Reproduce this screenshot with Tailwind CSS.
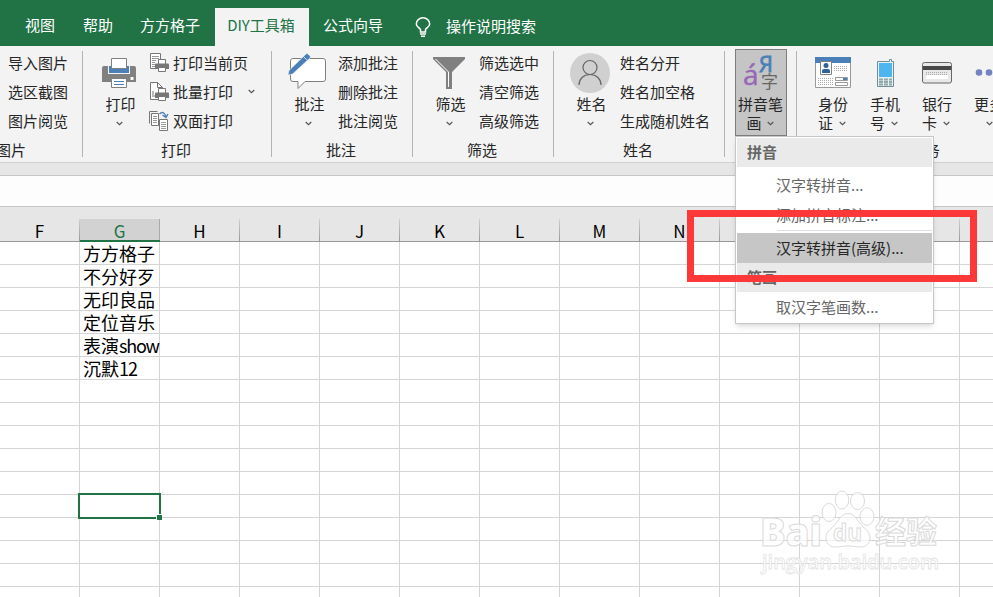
<!DOCTYPE html>
<html lang="zh">

<head>
    <meta charset="UTF-8">
    <meta name="viewport" content="width=device-width, initial-scale=1.0">
    <title>DIY工具箱</title>
    <script src="https://cdn.jsdelivr.net/npm/@tailwindcss/browser@4"></script>
</head>

<body class="relative w-[993px] h-[597px] overflow-hidden bg-white font-['Noto_Sans_CJK_SC',sans-serif] text-[15px] leading-[18px] text-[#262626] whitespace-nowrap">
    <svg class="hidden">
        <symbol id="chevron" viewBox="0 0 7 5">
            <path d="M.7 1l2.8 2.7L6.3 1" fill="none" stroke="#555" stroke-width="1.2" />
        </symbol>
        <symbol id="mini-printer" viewBox="0 0 14 13">
            <path d="M3.5 5V.5h7V5" fill="#fff" stroke="#767676" />
            <path d="M0 5.5Q0 4.5 1 4.5h12q1 0 1 1V10H0z" fill="#767676" />
            <path d="M3.5 8.5h7v4h-7z" fill="#fff" stroke="#767676" />
        </symbol>
    </svg>

    <!-- tabs -->
    <header class="h-[46px] pt-2 flex bg-[#217346] text-white">
        <div class="w-[215px] pl-[25px] pt-[8px] flex">
            <span class="w-[58px]">视图</span>
            <span class="w-[57px]">帮助</span>
            <span>方方格子</span>
        </div>
        <div class="w-[94px] pt-[8px] pr-[2px] bg-[#f3f3f3] text-[#217346] text-center">DIY工具箱</div>
        <div class="pl-[14px] pt-[8px] flex">
            <span class="w-[92px]">公式向导</span>
            <svg class="w-[16px] h-[20px] mt-px" viewBox="0 0 16 20" fill="none" stroke="#fff" stroke-width="1.5">
                <path d="M5.500 15v-2.500C4 10.500 1.300 9.500 1.300 7a6.700 6.200 0 0 1 13.400 0c0 2.500-2.700 3.500-4.200 5.500V15zM5 17h6M6 19.200h4" />
            </svg>
            <span class="ml-[15px] pt-px">操作说明搜索</span>
        </div>
    </header>

    <!-- ribbon -->
    <section class="h-[117px] flex bg-[#f3f3f3] border-b border-[#d0d0d0] overflow-hidden">
        <div class="w-[83px] shrink-0 flex">
            <div class="w-[82px] pt-[2px]">
                <div class="h-[89px] pl-[8px] leading-[29px]">
                    <div>导入图片</div>
                    <div>选区截图</div>
                    <div>图片阅览</div>
                </div>
                <div class="-ml-[4px] mt-[4px]">图片</div>
            </div>
            <div class="w-px h-[106px] mt-[5px] bg-[#b3b3b3]"></div>
        </div>

        <div class="w-[189px] shrink-0 flex">
            <div class="w-[188px] pt-[4px]">
                <div class="flex h-[87px]">
                    <div class="ml-[6px] w-[60px] flex flex-col items-center">
                        <svg class="w-[34px] h-[31px] mt-[8px]" viewBox="0 0 34 31">
                            <path d="M0 10q0-2 2-2h30q2 0 2 2v14H0z" fill="#808080" />
                            <path d="M6 8h22v8H6z" fill="#f3f3f3" />
                            <path d="M7 8h20v7H7z" fill="#4a7fb8" />
                            <path d="M9.500.5h15v10h-15z" fill="#fff" stroke="#808080" />
                            <path d="M28.500 19h3v3h-3z" fill="#fff" />
                            <path d="M9.500 20.500h15v9h-15z" fill="#fff" stroke="#808080" />
                            <path d="M12 23.500h10M12 26.500h10" stroke="#4a7fb8" />
                        </svg>
                        <span class="mt-[6px] ml-[3px]">打印</span>
                        <svg class="w-[7px] h-[5px] mt-[8px]"><use href="#chevron" /></svg>
                    </div>
                    <div class="leading-[29px] -mt-[2px]">
                        <div class="flex h-[29px] items-center">
                            <svg class="w-[20px] h-[20px] mr-[4px] mt-px" viewBox="0 0 20 20">
                                <path d="M1.500.5h10v15h-10z" fill="#fff" stroke="#767676" />
                                <path d="M3 3.500h7M3 5.500h7M3 7.500h4M3 9.500h3M3 11.500h3M3 13.500h3" stroke="#999" />
                                <use href="#mini-printer" x="6" y="6" width="14" height="13" />
                            </svg>
                            <span>打印当前页</span>
                        </div>
                        <div class="flex h-[29px] items-center">
                            <svg class="w-[20px] h-[20px] mr-[4px] mt-px" viewBox="0 0 20 20">
                                <path d="M1.500.5h7l5 5v12h-12z" fill="#fff" stroke="#767676" />
                                <path d="M8.500.5v5h5M3 14h3M4 9v4" fill="none" stroke="#767676" />
                                <use href="#mini-printer" x="6" y="6" width="14" height="13" />
                            </svg>
                            <span>批量打印</span>
                            <svg class="w-[7px] h-[5px] ml-[15px]"><use href="#chevron" /></svg>
                        </div>
                        <div class="flex h-[29px] items-center">
                            <svg class="w-[20px] h-[20px] mr-[4px]" viewBox="0 0 20 20">
                                <path d="M.5 12.500V.5h8" fill="none" stroke="#767676" />
                                <path d="M2.500 2.500h7v12h-7z" fill="#fff" stroke="#767676" />
                                <path d="M4 5.500h4M4 7.500h4M4 9.500h4M4 11.500h4" stroke="#999" />
                                <path d="M10.500 8.500h8v11h-8z" fill="#fff" stroke="#767676" />
                                <path d="M12 11.500h5M12 13.500h5M12 15.500h5M12 17.500h5" stroke="#999" />
                                <path d="M10.500 3q4-4 6.500 2.500M13.500 4l3.500 2.500L19 3" fill="none" stroke="#4a7fb8" stroke-width="1.400" />
                            </svg>
                            <span>双面打印</span>
                        </div>
                    </div>
                </div>
                <div class="mt-[4px] pr-[2px] text-center">打印</div>
            </div>
            <div class="w-px h-[106px] mt-[5px] bg-[#b3b3b3]"></div>
        </div>

        <div class="w-[141px] shrink-0 flex">
            <div class="w-[140px] pt-[4px]">
                <div class="flex h-[87px]">
                    <div class="ml-[6px] w-[60px] flex flex-col items-center">
                        <svg class="w-[38px] h-[37px] mt-[3px] ml-[-2px]" viewBox="0 0 38 37">
                            <path d="M5 5.500h30q2.500 0 2.500 2.500v18q0 2.500-2.500 2.500H17l-7 7v-7H5q-2.500 0-2.500-2.500V8q0-2.500 2.500-2.500z" fill="#fff" stroke="#808080" />
                            <path d="M0 22l1-4.500L18 1q1-1 2 0l2 2q1 1 0 2L4.500 21z" fill="#4a7fb8" stroke="#f3f3f3" stroke-width=".6" />
                            <path d="M15.500 3.500l4 4" stroke="#f3f3f3" stroke-width=".8" />
                        </svg>
                        <span class="mt-[5px] ml-[3px]">批注</span>
                        <svg class="w-[7px] h-[5px] mt-[8px]"><use href="#chevron" /></svg>
                    </div>
                    <div class="leading-[29px] -mt-[2px]">
                        <div>添加批注</div>
                        <div>删除批注</div>
                        <div>批注阅览</div>
                    </div>
                </div>
                <div class="mt-[4px] pr-[2px] text-center">批注</div>
            </div>
            <div class="w-px h-[106px] mt-[5px] bg-[#b3b3b3]"></div>
        </div>

        <div class="w-[141px] shrink-0 flex">
            <div class="w-[140px] pt-[4px]">
                <div class="flex h-[87px]">
                    <div class="ml-[6px] w-[60px] flex flex-col items-center">
                        <svg class="w-[32px] h-[32px] mt-[7px]" viewBox="0 0 32 32">
                            <path d="M0 0h32v2L19 15v17h-6V15L0 2z" fill="#808080" />
                            <path d="M2.500 2l13 13v15" fill="none" stroke="#fff" />
                        </svg>
                        <span class="mt-[6px] ml-[3px]">筛选</span>
                        <svg class="w-[7px] h-[5px] mt-[8px]"><use href="#chevron" /></svg>
                    </div>
                    <div class="leading-[29px] -mt-[2px]">
                        <div>筛选选中</div>
                        <div>清空筛选</div>
                        <div>高级筛选</div>
                    </div>
                </div>
                <div class="mt-[4px] pr-[2px] text-center">筛选</div>
            </div>
            <div class="w-px h-[106px] mt-[5px] bg-[#b3b3b3]"></div>
        </div>

        <div class="w-[171px] shrink-0 flex">
            <div class="w-[170px] pt-[4px]">
                <div class="flex h-[87px]">
                    <div class="ml-[6px] w-[60px] flex flex-col items-center">
                        <svg class="w-[40px] h-[40px] mt-[3px]" viewBox="0 0 40 40">
                            <circle cx="20" cy="20" r="20" fill="#d0d0d0" />
                            <g fill="none" stroke="#666" stroke-width="1.200">
                                <circle cx="20" cy="14.500" r="7" />
                                <path d="M9 32c0-6 4.500-10.500 11-10.500S31 26 31 32" />
                            </g>
                        </svg>
                        <span class="mt-[2px] ml-[3px]">姓名</span>
                        <svg class="w-[7px] h-[5px] mt-[8px]"><use href="#chevron" /></svg>
                    </div>
                    <div class="leading-[29px] -mt-[2px]">
                        <div>姓名分开</div>
                        <div>姓名加空格</div>
                        <div>生成随机姓名</div>
                    </div>
                </div>
                <div class="mt-[4px] pr-[2px] text-center">姓名</div>
            </div>
            <div class="w-px h-[106px] mt-[5px] bg-[#b3b3b3]"></div>
        </div>

        <div class="w-[72px] shrink-0 flex">
            <div class="ml-[10px] mr-[9px] mt-[3px] w-[52px] h-[87px] shrink-0 flex flex-col items-center bg-[#c5c5c5] border border-[#7d7d7d]">
                <svg class="w-[36px] h-[40px] mt-[3px]" viewBox="0 0 36 40">
                    <text x="0" y="32" font-family="Open Sans" font-size="28" fill="#9668b8" stroke="#9668b8" stroke-width=".5">á</text>
                    <text x="16" y="19" font-family="Open Sans" font-size="22" fill="#4a7fb8" stroke="#4a7fb8" stroke-width=".8">Я</text>
                    <text x="18" y="35" font-family="Noto Sans CJK SC" font-size="17" fill="#666">字</text>
                </svg>
                <span class="mt-[2px] -ml-px">拼音笔</span>
                <div class="mt-px -ml-[2px] flex items-center"><span>画</span><svg class="w-[7px] h-[5px] ml-[5px]"><use href="#chevron" /></svg></div>
            </div>
            <div class="w-px h-[106px] mt-[5px] bg-[#b3b3b3] shrink-0"></div>
        </div>

        <div class="pl-[10px] pt-[4px] shrink-0">
            <div class="flex h-[87px]">
                <div class="w-[52px] flex flex-col items-center">
                    <svg class="w-[36px] h-[31px] mt-[7px]" viewBox="0 0 36 31">
                        <path d="M.5.5h35v30H.5z" fill="#fff" stroke="#999" />
                        <path d="M0 0h36v6H0z" fill="#4a7fb8" />
                        <path d="M5.500 4.500h11v13h-11z" fill="#fff" stroke="#808080" />
                        <circle cx="11" cy="8.500" r="2.500" fill="#2f6299" />
                        <path d="M7 16v-2q0-2 2-2h4q2 0 2 2v2z" fill="#2f6299" />
                        <path d="M19 9.500h14M19 11.500h14M19 13.500h14M3 21.500h15M3 23.500h15M3 25.500h15M3 27.500h15" stroke="#aaa" stroke-dasharray="1 1" />
                        <path d="M20.500 20.500h12v3h-12zM20.500 25.500h12v3h-12z" fill="#fff" stroke="#999" />
                        <path d="M28 21h4v2h-4z" fill="#4a7fb8" />
                    </svg>
                    <span class="mt-[7px]">身份</span>
                    <div class="mt-px -ml-[2px] flex items-center"><span>证</span><svg class="w-[7px] h-[5px] ml-[6px]"><use href="#chevron" /></svg></div>
                </div>
                <div class="w-[52px] flex flex-col items-center">
                    <svg class="w-[17px] h-[28px] mt-[9px]" viewBox="0 0 17 28">
                        <path d="M.5 2.500h12v-2h2v2h2v25H.5z" fill="#e8f0f2" stroke="#6d9098" />
                        <path d="M2 4h13v14H2z" fill="#4db5f0" />
                        <path d="M2 20.500h4M7 20.500h4M12 20.500h3M2 23h4M7 23h4M12 23h3M2 25.500h4M7 25.500h4M12 25.500h3" stroke="#8fa8a8" stroke-width="1.800" />
                    </svg>
                    <span class="mt-[8px]">手机</span>
                    <div class="mt-px -ml-[2px] flex items-center"><span>号</span><svg class="w-[7px] h-[5px] ml-[6px]"><use href="#chevron" /></svg></div>
                </div>
                <div class="w-[52px] flex flex-col items-center">
                    <svg class="w-[30px] h-[22px] mt-[12px]" viewBox="0 0 30 22">
                        <rect x=".5" y=".5" width="29" height="20.500" rx="2" fill="#e8e8e8" stroke="#666" />
                        <path d="M1 4h28v4H1z" fill="#484848" />
                        <path d="M4 10.500h22M4 12.500h22" stroke="#aaa" stroke-dasharray="1 1" />
                        <path d="M4 13h22v4H4z" fill="#fff" />
                    </svg>
                    <span class="mt-[11px]">银行</span>
                    <div class="mt-px -ml-[2px] flex items-center"><span>卡</span><svg class="w-[7px] h-[5px] ml-[6px]"><use href="#chevron" /></svg></div>
                </div>
                <div class="w-[52px] flex flex-col items-center">
                    <svg class="w-[28px] h-[7px] mt-[19px]" viewBox="0 0 28 7" fill="#7482c0">
                        <circle cx="4" cy="3.500" r="3.300" />
                        <circle cx="14" cy="3.500" r="3.300" />
                        <circle cx="24" cy="3.500" r="3.300" />
                    </svg>
                    <span class="mt-[19px]">更多</span>
                    <svg class="w-[7px] h-[5px] mt-[8px]"><use href="#chevron" /></svg>
                </div>
            </div>
            <div class="mt-[4px] pl-[103px]">财务</div>
        </div>
    </section>

    <!-- formula bar -->
    <div class="h-[13px] bg-[#e6e6e6] border-b border-[#c6c6c6]"></div>
    <div class="h-[31px] bg-[#fdfdfd] border-b border-[#c6c6c6]"></div>

    <!-- sheet -->
    <div id="columns" class="h-[35px] pt-3 w-[1040px] flex bg-[#e6e6e6] border-b border-[#999] text-[17px] leading-[24px] text-black text-center"></div>
    <div id="cells" class="w-[1040px] grid grid-cols-13 auto-rows-[23px] text-[18px] leading-[23px] text-black"></div>

    <!-- active cell -->
    <div class="absolute left-[78px] top-[493px] w-[83px] h-[26px] border-2 border-[#217346]">
        <div class="absolute -right-[3px] -bottom-[3px] w-[6px] h-[6px] border-t border-l border-white bg-[#217346]"></div>
    </div>

    <!-- watermark -->
    <svg class="absolute left-[755px] top-[485px] w-[190px] h-[95px]" viewBox="755 485 190 95" fill="#fff" fill-opacity=".7" stroke="#dadada" stroke-width="1" font-family="Open Sans, Noto Sans CJK SC">
        <text x="760" y="546" font-size="39" font-weight="800" textLength="62" lengthAdjust="spacingAndGlyphs">Bai</text>
        <ellipse cx="829" cy="512.500" rx="7" ry="9" />
        <ellipse cx="842" cy="500" rx="6.800" ry="9" />
        <ellipse cx="857.500" cy="501" rx="7" ry="8.500" />
        <ellipse cx="867" cy="516.500" rx="7" ry="8.800" />
        <path d="M848 513.500c7 0 9 7 13 11 5 5 9 8 9 13 0 6-4 9.500-9 9.500-5 0-8-1-13-1s-8 1-13 1c-6 0-9-4-9-9.500 0-6 5-8 9-13 4-4 6-11 13-11z" />
        <text x="833" y="541" font-size="24" font-weight="700" textLength="29" lengthAdjust="spacingAndGlyphs">du</text>
        <text x="875" y="543" font-size="31" font-weight="700" textLength="62" lengthAdjust="spacingAndGlyphs">经验</text>
        <text x="762" y="569" font-size="20" font-weight="600" textLength="177" lengthAdjust="spacingAndGlyphs" stroke="#e4e4e4" stroke-width=".8">jingyan.baidu.com</text>
    </svg>

    <!-- dropdown -->
    <div class="absolute left-[735px] top-[136px] w-[199px] h-[188px] p-px bg-white border border-[#c6c6c6] shadow-md text-[#666]">
        <div class="h-[29px] pl-[10px] leading-[28px] bg-[#eaeaea] font-bold">拼音</div>
        <div class="h-[63px] pl-[39px] pt-[3px] leading-[30px]">
            <div>汉字转拼音...</div>
            <div>添加拼音标注...</div>
        </div>
        <div class="h-px ml-[40px] bg-[#dcdfe3]"></div>
        <div class="mt-[2px] h-[30px] pl-[39px] leading-[30px] bg-[#c6c6c6] text-[#262626]">汉字转拼音(高级)...</div>
        <div class="h-[29px] pl-[10px] leading-[27px] bg-[#eaeaea] font-bold">笔画</div>
        <div class="pl-[39px] leading-[29px]">取汉字笔画数...</div>
    </div>

    <!-- highlight frame -->
    <div class="absolute left-[687px] top-[210px] w-[290px] h-[72px] border-[7px] border-[#fc3838]"></div>

    <script>
        const columns = document.getElementById('columns');
        const cells = document.getElementById('cells');
        const values = ['方方格子', '不分好歹', '无印良品', '定位音乐', '表演<span class="tracking-[-1.2px]">show</span>', '沉默<span class="tracking-[-1px]">12</span>'];

        [...'FGHIJKLMNOPQR'].forEach((name) => {
            const active = name === 'G';
            columns.innerHTML += active
                ? `<div class="w-[80px] h-[23px] flex border-b-2 border-[#217346] bg-[#d2d2d2] text-[#217346]"><span class="w-[79px]">${name}</span><i class="w-px h-[21px] bg-[#aaa]"></i></div>`
                : `<div class="w-[80px] h-[22px] flex"><span class="w-[79px]">${name}</span><i class="w-px h-[22px] bg-linear-to-b from-[#d0d0d0] to-[#999]"></i></div>`;
        });

        for (let row = 0; row < 16; row++) {
            for (let col = 0; col < 13; col++) {
                const text = col === 1 ? values[row] || '' : '';
                cells.innerHTML += `<div class="pl-[3px] border-r border-b border-[#d4d4d4]">${text}</div>`;
            }
        }
    </script>
</body>

</html>
